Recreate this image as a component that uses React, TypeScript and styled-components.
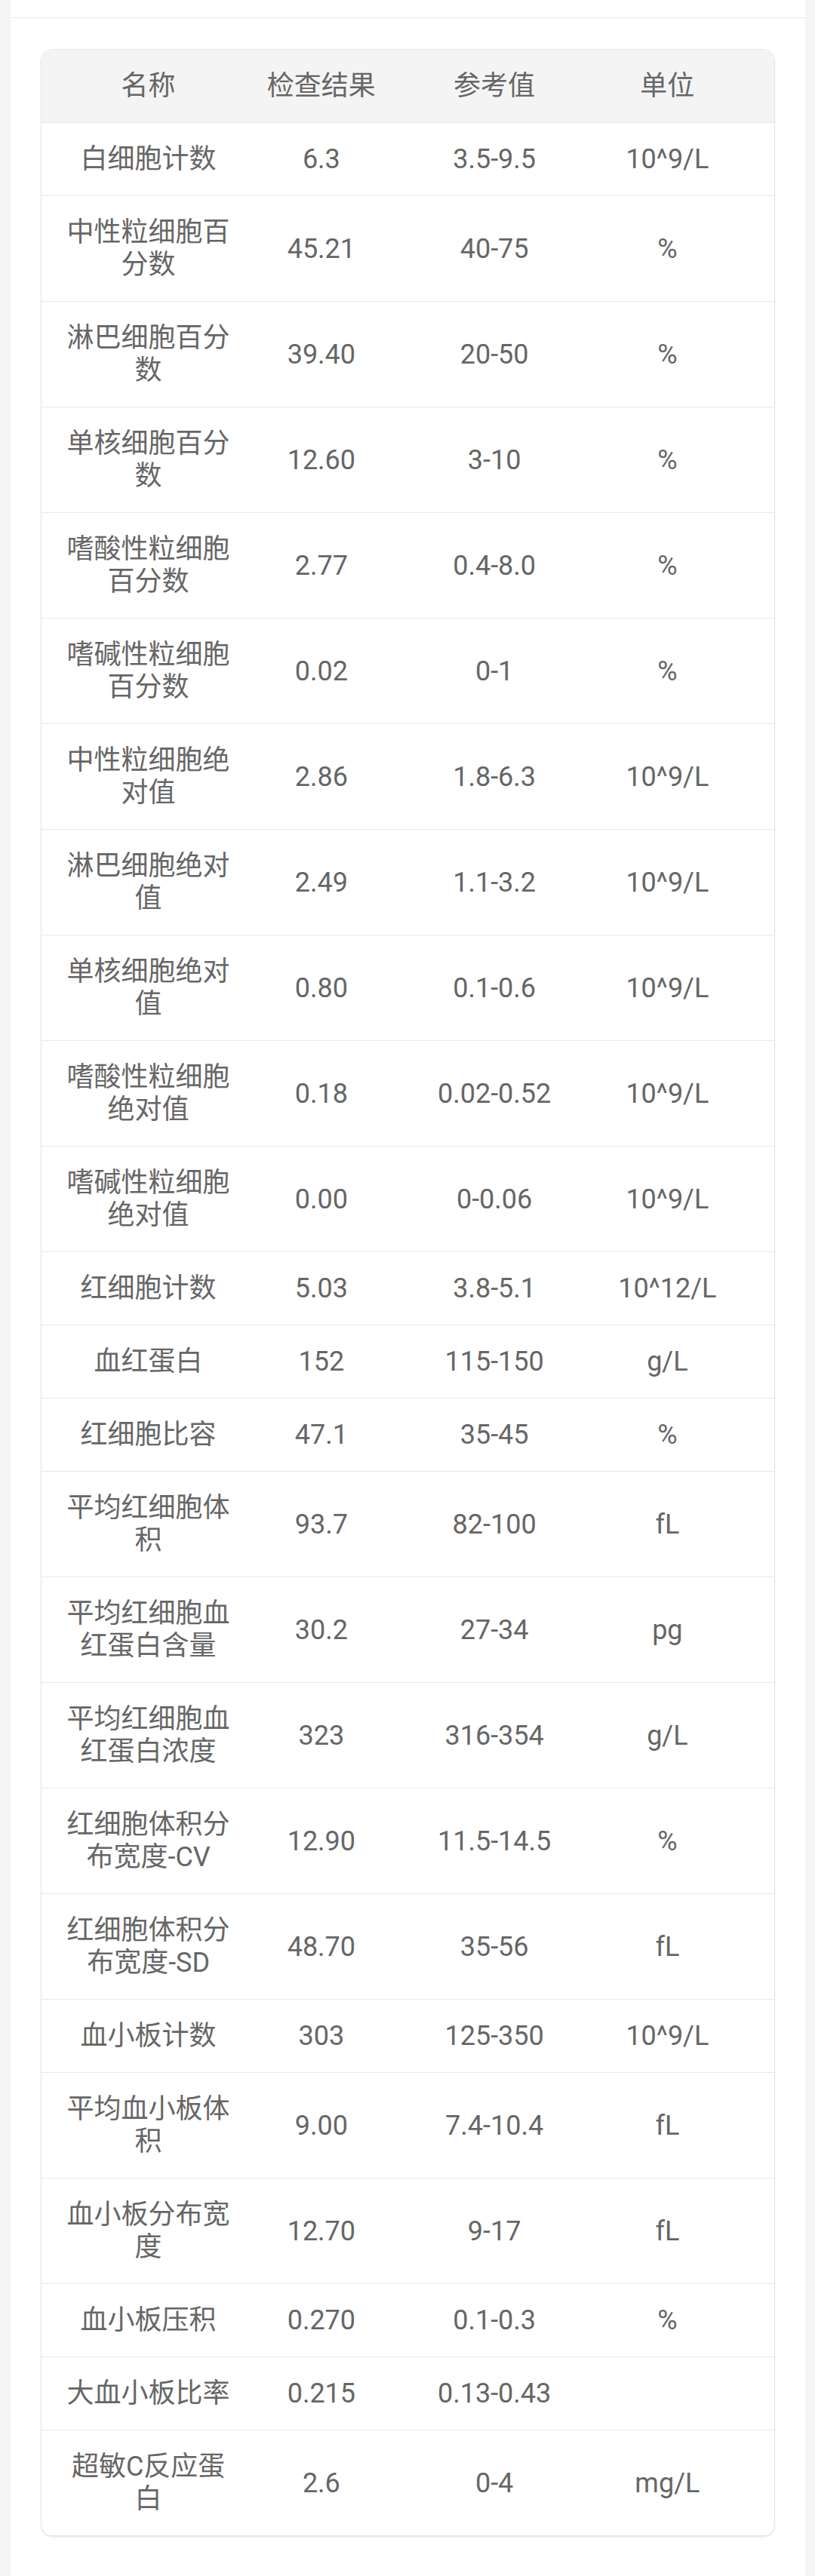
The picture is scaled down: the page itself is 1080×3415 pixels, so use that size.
import React from 'react';
import styled, { createGlobalStyle } from 'styled-components';

interface LabItem {
  name: string;
  result: string;
  range: string;
  unit: string;
}

const items: LabItem[] = [
  { name: '白细胞计数', result: '6.3', range: '3.5-9.5', unit: '10^9/L' },
  { name: '中性粒细胞百分数', result: '45.21', range: '40-75', unit: '%' },
  { name: '淋巴细胞百分数', result: '39.40', range: '20-50', unit: '%' },
  { name: '单核细胞百分数', result: '12.60', range: '3-10', unit: '%' },
  { name: '嗜酸性粒细胞百分数', result: '2.77', range: '0.4-8.0', unit: '%' },
  { name: '嗜碱性粒细胞百分数', result: '0.02', range: '0-1', unit: '%' },
  { name: '中性粒细胞绝对值', result: '2.86', range: '1.8-6.3', unit: '10^9/L' },
  { name: '淋巴细胞绝对值', result: '2.49', range: '1.1-3.2', unit: '10^9/L' },
  { name: '单核细胞绝对值', result: '0.80', range: '0.1-0.6', unit: '10^9/L' },
  { name: '嗜酸性粒细胞绝对值', result: '0.18', range: '0.02-0.52', unit: '10^9/L' },
  { name: '嗜碱性粒细胞绝对值', result: '0.00', range: '0-0.06', unit: '10^9/L' },
  { name: '红细胞计数', result: '5.03', range: '3.8-5.1', unit: '10^12/L' },
  { name: '血红蛋白', result: '152', range: '115-150', unit: 'g/L' },
  { name: '红细胞比容', result: '47.1', range: '35-45', unit: '%' },
  { name: '平均红细胞体积', result: '93.7', range: '82-100', unit: 'fL' },
  { name: '平均红细胞血红蛋白含量', result: '30.2', range: '27-34', unit: 'pg' },
  { name: '平均红细胞血红蛋白浓度', result: '323', range: '316-354', unit: 'g/L' },
  { name: '红细胞体积分布宽度-CV', result: '12.90', range: '11.5-14.5', unit: '%' },
  { name: '红细胞体积分布宽度-SD', result: '48.70', range: '35-56', unit: 'fL' },
  { name: '血小板计数', result: '303', range: '125-350', unit: '10^9/L' },
  { name: '平均血小板体积', result: '9.00', range: '7.4-10.4', unit: 'fL' },
  { name: '血小板分布宽度', result: '12.70', range: '9-17', unit: 'fL' },
  { name: '血小板压积', result: '0.270', range: '0.1-0.3', unit: '%' },
  { name: '大血小板比率', result: '0.215', range: '0.13-0.43', unit: '' },
  { name: '超敏C反应蛋白', result: '2.6', range: '0-4', unit: 'mg/L' },
];

export default function App() {
  return (
    <>
      <GlobalStyle />
      <Page>
        <TopBar />
        <Content>
          <Table>
            <HeaderRow>
              <Cell>名称</Cell>
              <Cell>检查结果</Cell>
              <Cell>参考值</Cell>
              <Cell>单位</Cell>
            </HeaderRow>
            {items.map((item, i) => (
              <Row key={item.name} last={i === items.length - 1}>
                <Cell>{item.name}</Cell>
                <Cell>{item.result}</Cell>
                <Cell>{item.range}</Cell>
                <Cell>{item.unit}</Cell>
              </Row>
            ))}
          </Table>
        </Content>
        <Watermark>@小红书 in house086</Watermark>
      </Page>
    </>
  );
}

const GlobalStyle = createGlobalStyle`
  html, body {
    margin: 0;
    padding: 0;
    background: #f5f5f5;
  }
  body {
    font-family: Roboto, "Noto Sans CJK SC", sans-serif;
  }
`;

const Page = styled.div`
  position: relative;
  margin: 0 13px 0 14px;
  min-height: 3415px;
  background: #fff;
`;

const TopBar = styled.div`
  height: 23px;
  border-bottom: 1px solid #e8e8e8;
`;

const Content = styled.div`
  padding: 41px 40px 0 40px;
`;

const Table = styled.div`
  border: 1px solid #e6e6e6;
  border-radius: 15px;
  overflow: hidden;
  background: #fff;
  box-shadow: 0 2px 2px rgba(0, 0, 0, 0.07);
`;

const Row = styled.div<{ last?: boolean }>`
  display: grid;
  grid-template-columns: repeat(4, 1fr);
  align-items: center;
  padding: 27px 27px 26px;
  border-bottom: ${props => (props.last ? 'none' : '1px solid #e8e8e8')};
  font-size: 36px;
  line-height: 43px;
  color: #666;
`;

const HeaderRow = styled(Row)`
  background: #f4f4f4;
  border-bottom: 1px solid #e4e4e4;
`;

const Cell = styled.div`
  text-align: center;
  word-break: break-all;
`;

const Watermark = styled.div`
  position: absolute;
  right: 8px;
  top: 3354px;
  font-size: 37px;
  line-height: 46px;
  color: rgba(0, 0, 0, 0.025);
  white-space: nowrap;
  pointer-events: none;
`;
